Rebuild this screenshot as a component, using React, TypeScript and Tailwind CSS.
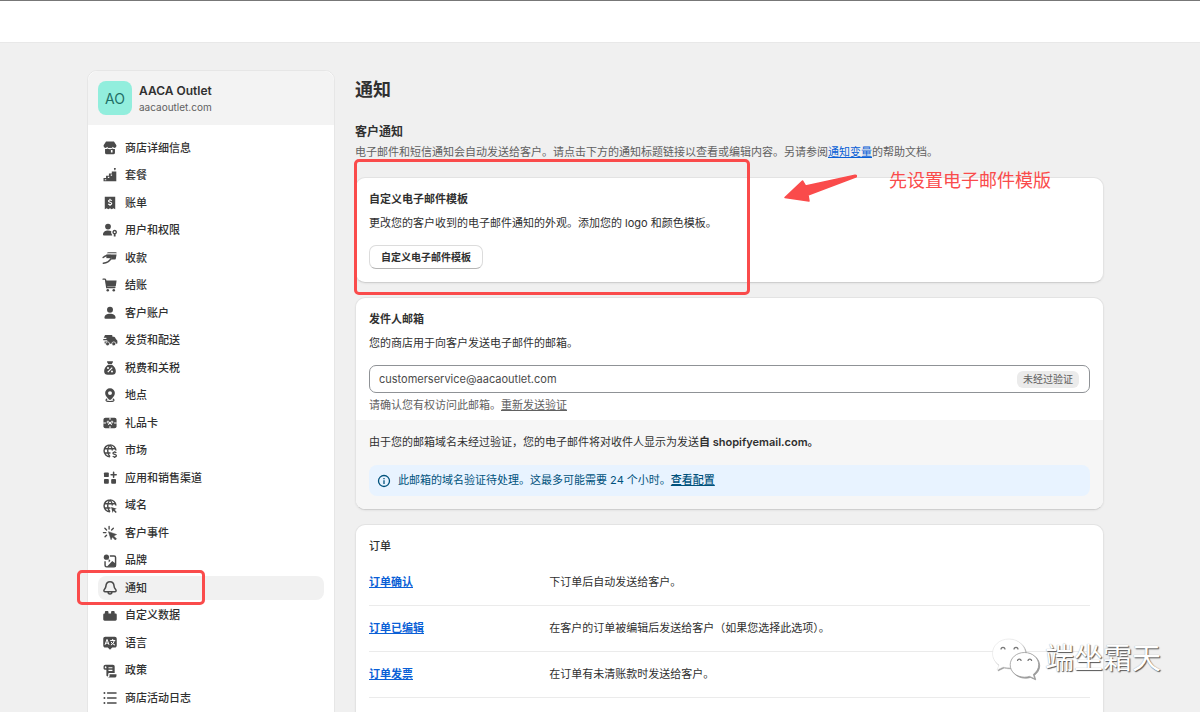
import React from 'react';

type IconName =
  | 'store' | 'plan' | 'bill' | 'users' | 'payment' | 'cart' | 'person' | 'truck' | 'tax' | 'pin' | 'gift'
  | 'market' | 'apps' | 'domain' | 'events' | 'brand' | 'bell' | 'data' | 'language' | 'policy' | 'log';

const navItems: { label: string; icon: IconName; active?: boolean }[] = [
  { label: '商店详细信息', icon: 'store' },
  { label: '套餐', icon: 'plan' },
  { label: '账单', icon: 'bill' },
  { label: '用户和权限', icon: 'users' },
  { label: '收款', icon: 'payment' },
  { label: '结账', icon: 'cart' },
  { label: '客户账户', icon: 'person' },
  { label: '发货和配送', icon: 'truck' },
  { label: '税费和关税', icon: 'tax' },
  { label: '地点', icon: 'pin' },
  { label: '礼品卡', icon: 'gift' },
  { label: '市场', icon: 'market' },
  { label: '应用和销售渠道', icon: 'apps' },
  { label: '域名', icon: 'domain' },
  { label: '客户事件', icon: 'events' },
  { label: '品牌', icon: 'brand' },
  { label: '通知', icon: 'bell', active: true },
  { label: '自定义数据', icon: 'data' },
  { label: '语言', icon: 'language' },
  { label: '政策', icon: 'policy' },
  { label: '商店活动日志', icon: 'log' },
];

const orderRows = [
  { name: '订单确认', description: '下订单后自动发送给客户。' },
  { name: '订单已编辑', description: '在客户的订单被编辑后发送给客户（如果您选择此选项）。' },
  { name: '订单发票', description: '在订单有未清账款时发送给客户。' },
];

const globe = (
  <path
    d="M10 3.2a6.6 6.6 0 1 0 0 13.2M10 3.2a6.6 6.6 0 0 1 6.6 6.2M10 3.2c-3.4 3.6-3.4 9.4 0 13.2M10 3.2c1.7 1.8 2.5 4 2.6 6.2M4 7.5h12M4 12.3h6.5"
    fill="none"
    stroke="currentColor"
    strokeWidth="1.6"
  />
);

const iconShapes: Record<IconName, React.ReactNode> = {
  store: (
    <>
      <path d="M5.6 2.800h8.800l2.700 4.200v.8a2.100 2.100 0 0 1-4 .9 2.200 2.200 0 0 1-3.100.9 2.200 2.200 0 0 1-3.100-.9 2.100 2.100 0 0 1-4-.9V7z" />
      <path d="M4.500 11c1 .4 2 .2 2.700-.5 1.600 1 4 1 5.600 0 .8.7 1.700.9 2.700.5v4.200a1.800 1.800 0 0 1-1.800 1.800H6.300a1.800 1.800 0 0 1-1.800-1.800zM11 12.200V15h1.800v-2.800z" fillRule="evenodd" />
    </>
  ),
  plan: (
    <path d="M2.800 13.200h2.800v-2.500h3.200V8.200H12V6.200h5V17H2.800zM4.200 14.600v1.200h1.600v-1.200zM7.600 12v1.200h1.600V12zM10.800 9.500v1.200h1.500V9.500zM14.300 2.200h2.200l-.6 2.600h-1z" fillRule="evenodd" />
  ),
  bill: (
    <>
      <path d="M4.200 3h11.600v14l-2-1.300-1.900 1.300-1.900-1.300L8.100 17l-1.900-1.300-2 1.300z" />
      <path d="M12 7.300c-.7-.8-3.600-1.100-3.700.5-.1 1.700 3.700.9 3.600 2.700-.1 1.700-3 1.500-3.900.5M10 5.300v1.200M10 12v1.300" fill="none" stroke="#fff" strokeWidth="1.3" />
    </>
  ),
  users: (
    <>
      <circle cx="7.8" cy="6.2" r="3.2" />
      <path d="M2.200 15.200c0-3.200 2.500-4.700 5.600-4.700 1.500 0 2.700.3 3.700 1-.5 1.500-.1 2.800.9 3.700v.9H3.200c-.6 0-1-.3-1-.9z" />
      <path d="M15.200 9.800a2.600 2.600 0 0 1 1 5v2.400h-2v-2.400a2.600 2.600 0 0 1 1-5zm0 1.600a1 1 0 1 0 0 2 1 1 0 0 0 0-2z" fillRule="evenodd" />
    </>
  ),
  payment: (
    <>
      <path d="M8.300 3.500h8c.8 0 1.300.4 1.200 1.200H6.500c.3-.7.9-1.200 1.800-1.200zM5.800 6.200h11.500l-.8 4.300c-.2.900-.8 1.300-1.600 1.300h-4l1.300-2.200c-2.500.8-4.200.8-6 .2z" />
      <path d="M2.300 9.500c2.200-2.300 3.500-2.300 5.500-2.300h2.700c.7 1-2.300 2-3.700 2.400M2.500 15.800c4.500-.2 6.800-1.800 8.800-5.300" fill="none" stroke="currentColor" strokeWidth="1.5" strokeLinecap="round" />
    </>
  ),
  cart: (
    <>
      <path d="M2.300 3.500h1.800c.6 0 .9.3 1 .9l1.300 8.400h9" fill="none" stroke="currentColor" strokeWidth="1.5" strokeLinecap="round" />
      <path d="M5 5h12.300l-.8 5.700c-.1.700-.6 1.100-1.300 1.100H6z" />
      <circle cx="7.5" cy="15.8" r="1.4" />
      <circle cx="14.2" cy="15.8" r="1.4" />
    </>
  ),
  person: (
    <>
      <circle cx="10" cy="6.3" r="3.3" />
      <path d="M3.800 15.300c0-3 2.800-4.500 6.200-4.500s6.200 1.500 6.200 4.500c0 .8-.4 1.200-1.200 1.200H5c-.8 0-1.200-.4-1.200-1.200z" />
    </>
  ),
  truck: (
    <>
      <path d="M4.500 4.500h7c.7 0 1.200.4 1.200 1.100v.9h1.600c.6 0 1 .2 1.300.8l1.100 2 .9.6c.4.300.6.600.6 1.100v2.200c0 .7-.4 1.100-1.100 1.100H5.200c-.8 0-1.200-.5-1.200-1.200v-1.300h3v-1.400H2.500V9H6V7.600H3z" />
      <circle cx="7.3" cy="14.3" r="2.2" stroke="#fff" strokeWidth=".8" />
      <circle cx="14.2" cy="14.3" r="2.2" stroke="#fff" strokeWidth=".8" />
    </>
  ),
  tax: (
    <>
      <path d="M7.300 2.500h5.400c.5 0 .8.5.5 1L12 5.500H8l-1.200-2c-.3-.5 0-1 .5-1zM7.800 6.500h4.400c2.900 2.200 4.300 4.600 4.300 7 0 2.600-1.500 4-4 4h-5c-2.500 0-4-1.400-4-4 0-2.400 1.400-4.800 4.300-7z" />
      <path d="m7.500 14.500 5-5" stroke="#fff" strokeWidth="1.3" />
      <circle cx="7.8" cy="10" r="1.1" fill="#fff" />
      <circle cx="12.2" cy="14" r="1.1" fill="#fff" />
    </>
  ),
  pin: (
    <>
      <path d="M10 2.500a5.400 5.400 0 0 1 5.400 5.400c0 3.300-2.200 4.900-4.400 7.300H9c-2.200-2.400-4.400-4-4.400-7.300A5.400 5.400 0 0 1 10 2.500zm0 3.200a2.200 2.200 0 1 0 0 4.400 2.200 2.200 0 0 0 0-4.400z" fillRule="evenodd" />
      <path d="M6.500 14.500c-2.300 2 0 2.700 3.500 2.700s5.800-.7 3.500-2.700" fill="none" stroke="currentColor" strokeWidth="1.3" strokeLinecap="round" />
    </>
  ),
  gift: (
    <>
      <rect x="2.7" y="4.2" width="14.6" height="11.6" rx="2.2" />
      <path d="M10 4v2.500M10 13.500V16M2.500 10h3M14.500 10h3" stroke="#fff" strokeWidth="1.2" />
      <path d="M10 10c-1-2.300-3.300-2.600-3.300-1 0 1 1.500 1.200 3.300 1zm0 0c1-2.300 3.300-2.600 3.300-1 0 1-1.500 1.200-3.300 1zm0 0-2 2.300M10 10l2 2.300" fill="none" stroke="#fff" strokeWidth="1.1" />
    </>
  ),
  market: (
    <>
      {globe}
      <path d="M17 12c-.8-1-3.700-1-3.700.6s3.800.8 3.800 2.600c0 1.700-3 1.700-4 .5M15.200 10.200v1.200M15.200 16.500v1.300" fill="none" stroke="currentColor" strokeWidth="1.5" />
    </>
  ),
  apps: (
    <>
      <rect x="3.3" y="3.8" width="5.4" height="5.2" rx="1" />
      <rect x="3.3" y="11.2" width="5.4" height="5.2" rx="1" />
      <rect x="11.3" y="11.2" width="5.4" height="5.2" rx="1" />
      <path d="M14 3.500v5.700M11.200 6.300h5.700" stroke="currentColor" strokeWidth="1.7" strokeLinecap="round" />
    </>
  ),
  domain: (
    <>
      {globe}
      <path d="m11.200 11 6.300 2.100-2.400 1.100 2.400 2.500-1.200 1.100-2.400-2.400-1 2.300z" />
    </>
  ),
  events: (
    <>
      <path d="M9 2.800v2.700M4.300 4.800l1.900 1.900M2.700 9.500h2.700M4.500 14.200l1.700-1.700M13.700 4.800l-1.900 1.900" stroke="currentColor" strokeWidth="1.5" strokeLinecap="round" />
      <path d="m8.300 8.500 9 3.200-3.300 1.500 3.200 3.300-1.300 1.300-3.300-3.300-1.400 3z" stroke="currentColor" strokeWidth=".6" strokeLinejoin="round" />
    </>
  ),
  brand: (
    <>
      <circle cx="6" cy="5.7" r="2.9" />
      <path d="M9.800 4.500h4.700c1 0 1.700.7 1.700 1.700v8.600c0 1-.7 1.700-1.700 1.700H6.200c-1 0-1.700-.7-1.700-1.700v-4.500" fill="none" stroke="currentColor" strokeWidth="1.6" />
      <path d="m6.500 16.500 6-6.500 4 3v3.500zM8.500 7.500l2 2.200-2 2z" />
    </>
  ),
  bell: (
    <path
      d="M10 3c-2.700 0-4.300 2.100-4.500 4.700-.1 1.700-.6 2.500-1.600 3.600-1.200 1.300-.8 2.900 1 2.900h10.200c1.800 0 2.200-1.600 1-2.900-1-1.100-1.500-1.900-1.600-3.600C14.300 5.100 12.700 3 10 3zM7.900 14.400c0 3 4.200 3 4.200 0"
      fill="none"
      stroke="currentColor"
      strokeWidth="1.7"
    />
  ),
  data: (
    <path d="M4.300 5.500c0-.6.400-1 1-1h2c.6 0 1 .4 1 1v1.700h2.900V5.500c0-.6.400-1 1-1h2c.6 0 1 .4 1 1v1.700h.8c.9 0 1.500.6 1.500 1.500v5c0 .9-.6 1.500-1.500 1.500H4c-.9 0-1.500-.6-1.500-1.500v-5c0-.9.6-1.500 1.500-1.500h.3z" />
  ),
  language: (
    <>
      <path d="M4.800 3h10.400c1.400 0 2.300.9 2.300 2.300v7.400c0 1.400-.9 2.300-2.300 2.300h-2.700L10 17.500 7.500 15H4.800c-1.400 0-2.300-.9-2.300-2.300V5.300C2.500 3.900 3.400 3 4.800 3z" />
      <path d="m4.500 12 2.200-6 2.200 6M5.300 10.200h2.800M10.200 7.200h5.600M13 5.500v1.700M11 12.200c2-.8 3.400-2.600 3.600-5M11.300 8.800c.8 1.800 2.200 3 4.300 3.400" fill="none" stroke="#fff" strokeWidth="1.1" />
    </>
  ),
  policy: (
    <>
      <path d="M5 3h8.200c1.200 0 2 .8 2 2v7.300h-5.700c-.9 0-1.500.6-1.500 1.500V15c0 .7-.4 1-.9 1-.6 0-1.100-.4-1.100-1.200V8.500H4.300C3.300 8.500 2.800 8 2.800 7V5.200C2.800 3.900 3.700 3 5 3zm-.7 2.500V7H6V5.500c0-1.100-1.700-1.100-1.700 0zM8.300 5.800V7h4.400V5.800zm0 2.900v1.200h4.400V8.700z" fillRule="evenodd" />
      <path d="M9.500 13.700h7.700v1.500c0 1.200-.8 2-2 2H7.500c1.300-.2 2-1 2-2z" />
    </>
  ),
  log: (
    <>
      <path d="M7.300 4.500h9.400M7.300 10h9.400M7.300 15.500h9.400" stroke="currentColor" strokeWidth="1.6" strokeLinecap="round" />
      <circle cx="3.8" cy="4.500" r="1.1" />
      <circle cx="3.8" cy="10" r="1.1" />
      <circle cx="3.8" cy="15.5" r="1.1" />
    </>
  ),
};

const NavIcon = ({ name }: { name: IconName }) => (
  <svg viewBox="0 0 20 20" className="size-[18px] shrink-0 text-[#4a4a4a]" fill="currentColor" aria-hidden="true">
    {iconShapes[name]}
  </svg>
);

const Card = ({ children }: { children: React.ReactNode }) => (
  <section className="overflow-hidden rounded-[10px] border border-[#e3e3e3] border-b-[#cfcfcf] bg-white shadow-xs">
    {children}
  </section>
);

const Sidebar = () => (
  <aside className="w-[248px] shrink-0 rounded-t-[10px] border border-[#e6e6e6] bg-white">
    <div className="flex items-center gap-[7px] rounded-t-[10px] bg-[#f3f3f3] px-2.5 py-2.5">
      <div className="flex size-[34px] items-center justify-center rounded-lg bg-[#92eedd] text-[14px] text-[#1f6f66]">AO</div>
      <div className="pt-0.5">
        <div className="text-[12px] leading-4 font-semibold">AACA Outlet</div>
        <div className="text-[10px] leading-4 text-[#616161]">aacaoutlet.com</div>
      </div>
    </div>
    <nav className="px-2.5 pt-[9px] pb-3">
      <ul className="grid min-h-[578px] auto-rows-fr">
        {navItems.map((item) => (
          <li key={item.label} className="relative flex items-center">
            <a
              href="#"
              className={
                item.active
                  ? 'flex h-6 w-full items-center gap-1.5 rounded-lg bg-[#f1f1f1] px-[3px] text-[11px] font-medium'
                  : 'flex h-6 w-full items-center gap-1.5 rounded-lg px-[3px] text-[11px] font-medium'
              }
            >
              <NavIcon name={item.icon} />
              {item.label}
            </a>
            {item.active && (
              <span className="absolute -top-1 -left-[21px] h-[35px] w-[128px] rounded-[5px] border-[3px] border-[#fa4b4b]" />
            )}
          </li>
        ))}
      </ul>
    </nav>
  </aside>
);

const TemplateCard = () => (
  <div className="relative mt-[17px]">
    <Card>
      <div className="p-[13px]">
        <h3 className="text-[11px] leading-4 font-semibold">自定义电子邮件模板</h3>
        <p className="mt-2 text-[11px] leading-4">更改您的客户收到的电子邮件通知的外观。添加您的 logo 和颜色模板。</p>
        <button
          type="button"
          className="mt-3.5 flex h-6 w-[114px] items-center justify-center rounded-[7px] border border-[#dcdcdc] border-b-[#b5b5b5] text-[10px] font-semibold"
        >
          自定义电子邮件模板
        </button>
      </div>
    </Card>
    <span className="absolute -top-[18px] -left-px h-[136px] w-[396px] rounded-[5px] border-[3px] border-[#fa4b4b]" />
    <svg viewBox="0 0 74 30" className="absolute -top-1 left-[428px] h-[30px] w-[74px]" aria-hidden="true">
      <path
        d="M2 24.500 19.500 8l3 5L72 2.200c1.500-.2 2 1.300.6 1.800L25 22l1 6z"
        fill="#fa4b4b"
        stroke="#fa4b4b"
        strokeWidth="1.5"
        strokeLinejoin="round"
      />
    </svg>
    <p className="absolute -top-2.5 left-[534px] text-[18px] leading-7 whitespace-nowrap text-[#fa4b4b]">先设置电子邮件模版</p>
  </div>
);

const SenderCard = () => (
  <Card>
    <div className="px-[13px] pt-[13px] pb-[7px]">
      <h3 className="text-[11px] leading-4 font-semibold">
        <label htmlFor="sender">发件人邮箱</label>
      </h3>
      <p className="mt-2 text-[11px] leading-4">您的商店用于向客户发送电子邮件的邮箱。</p>
      <div className="mt-3.5 flex h-7 items-center rounded-[7px] border border-[#8f9296] pr-2.5 pl-[9px]">
        <input
          id="sender"
          type="email"
          defaultValue="customerservice@aacaoutlet.com"
          className="min-w-0 flex-1 bg-transparent text-[11px] text-[#4a4a4a] outline-none"
        />
        <span className="rounded-md bg-[#ebebeb] px-1.5 text-[10px] leading-[17px] text-[#616161]">未经过验证</span>
      </div>
      <p className="mt-1 text-[11px] leading-4 text-[#616161]">
        请确认您有权访问此邮箱。
        <a href="#" className="underline">重新发送验证</a>
      </p>
    </div>
    <div className="bg-[#f6f6f6] px-[13px] pt-3.5 pb-[13px]">
      <p className="text-[11px] leading-4">
        由于您的邮箱域名未经过验证，您的电子邮件将对收件人显示为发送<b className="font-semibold">自 shopifyemail.com。</b>
      </p>
      <div className="mt-[15px] flex h-[31px] items-center gap-1.5 rounded-lg bg-[#e8f3ff] px-[7px] text-[11px] text-[#00527c]">
        <svg viewBox="0 0 16 16" className="size-4" fill="none" stroke="currentColor" strokeWidth="1.3" aria-hidden="true">
          <circle cx="8" cy="8" r="5.5" />
          <path d="M8 7.300v3.700M8 5v1.300" />
        </svg>
        <p>
          此邮箱的域名验证待处理。这最多可能需要 24 个小时。
          <a href="#" className="font-medium underline">查看配置</a>
        </p>
      </div>
    </div>
  </Card>
);

const OrdersCard = () => (
  <Card>
    <div className="px-[13px] pt-[13px] pb-10">
      <h3 className="text-[11px] leading-4 font-medium">订单</h3>
      <table className="mt-[5px] w-full text-left text-[11px]">
        <tbody>
          {orderRows.map((row) => (
            <tr key={row.name} className="h-[46px] border-b border-[#ebebeb]">
              <th scope="row" className="w-1/4 font-semibold">
                <a href="#" className="text-[#0a5fd6] underline">{row.name}</a>
              </th>
              <td>{row.description}</td>
            </tr>
          ))}
        </tbody>
      </table>
    </div>
  </Card>
);

const Watermark = () => (
  <div className="absolute right-[39px] bottom-8 flex items-center gap-1">
    <svg viewBox="0 0 50 42" className="h-[42px] w-[50px] drop-shadow-[1px_1px_0px_#999]" aria-hidden="true">
      <path
        d="M18 1C8.500 1 1.500 7.500 1.500 15.500c0 4.800 2.500 8.800 6.500 11.500l-2 5 6.200-3c1.900.6 3.900.8 6.300.8C28 29.800 34.500 23 34.500 15.500S27.500 1 18 1z"
        fill="#fff"
        stroke="#ddd"
        strokeWidth=".5"
      />
      <path
        d="M33.500 14.500c-8 0-14.300 5.500-14.300 12.300 0 7 6.300 12.400 14.300 12.400 1.800 0 3.500-.3 5-.8l5.200 2.400-1.300-4.500c3.300-2.400 5.300-5.700 5.300-9.500 0-6.800-6.200-12.300-14.200-12.300z"
        fill="#fff"
        stroke="#999"
        strokeWidth=".8"
      />
      <path
        d="M10 11.500c0-2.800 4-2.800 4 0M23 11.500c0-2.800 4-2.800 4 0M26.500 23c0-2.600 3.600-2.600 3.600 0M37 23c0-2.600 3.600-2.600 3.600 0"
        fill="none"
        stroke="#777"
        strokeWidth="1.2"
      />
    </svg>
    <span className="text-[29px] leading-[42px] text-white [text-shadow:1px_1px_1px_#555,0_0_1px_#999]">端坐霜天</span>
  </div>
);

export default function App() {
  return (
    <div className="relative h-screen overflow-hidden bg-[#f0f0f0] font-['Inter','Noto_Sans_CJK_SC',sans-serif] text-[#303030]">
      <header className="h-[43px] border-t border-b border-t-[#777] border-b-[#e8e8e8] bg-white" />
      <div className="pt-[27px] pr-[9px]">
        <div className="mx-auto flex max-w-[1017px] gap-5">
          <Sidebar />
          <main className="min-w-0 flex-1">
            <h1 className="pt-2 text-[18px] leading-6 font-semibold">通知</h1>
            <h2 className="mt-[22px] text-[12px] leading-4 font-semibold">客户通知</h2>
            <p className="mt-1 text-[11px] leading-4 text-[#616161]">
              电子邮件和短信通知会自动发送给客户。请点击下方的通知标题链接以查看或编辑内容。另请参阅
              <a href="#" className="text-[#0a5fd6] underline">通知变量</a>
              的帮助文档。
            </p>
            <TemplateCard />
            <div className="mt-3.5 flex flex-col gap-3.5">
              <SenderCard />
              <OrdersCard />
            </div>
          </main>
        </div>
      </div>
      <Watermark />
    </div>
  );
}
